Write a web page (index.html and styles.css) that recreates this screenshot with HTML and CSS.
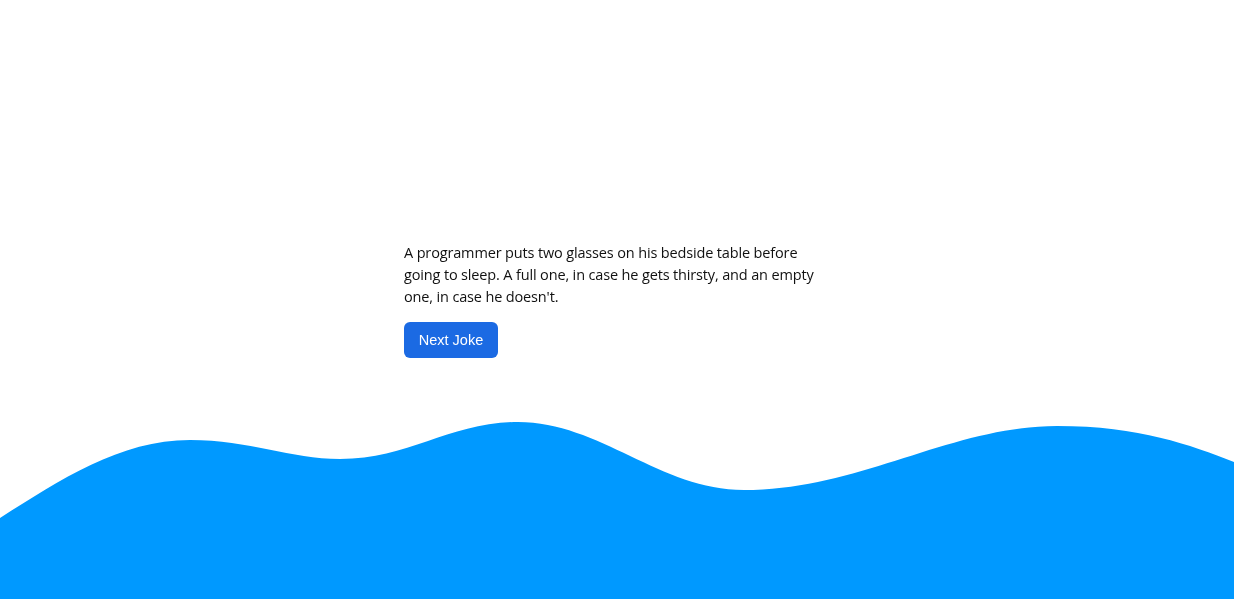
FILE: index.html
```html
<!DOCTYPE html>
<html lang="en">
<head>
<meta charset="utf-8">
<title>Jokes</title>
<link rel="stylesheet" href="styles.css">
</head>
<body>
<main class="page">
  <section class="joke-card">
    <p class="joke-text">A programmer puts two glasses on his bedside table before going to sleep. A full one, in case he gets thirsty, and an empty one, in case he doesn't.</p>
    <button class="next-btn" type="button">Next Joke</button>
  </section>
</main>
<svg class="wave" viewBox="0 0 1234 178" preserveAspectRatio="none" aria-hidden="true">
  <path fill="#0099ff" d="M0,97 C60,59 120,19 190,19 C250,19 290,38 340,38 C410,38 450,1 518,1 C600,1 660,69 744,69 C860,69 950,5 1057,5 C1140,5 1190,24 1234,41 L1234,178 L0,178 Z"/>
</svg>
</body>
</html>
```
FILE: styles.css
```css
html, body {
  margin: 0;
  padding: 0;
  background: #ffffff;
}
body {
  font-family: "Open Sans", "Noto Sans", sans-serif;
  color: #111111;
  overflow: hidden;
}
.page {
  min-height: 100vh;
  display: flex;
  align-items: center;
  justify-content: center;
  position: relative;
  z-index: 1;
}
.joke-card {
  width: 426px;
  display: flex;
  flex-direction: column;
  align-items: flex-start;
  gap: 14px;
  padding-top: 1px;
}
.joke-text {
  margin: 0;
  font-size: 14.5px;
  font-weight: 500;
  line-height: 22px;
  letter-spacing: -0.15px;
}
.next-btn {
  font-family: "Liberation Sans", Arial, sans-serif;
  font-size: 14.5px;
  color: #ffffff;
  background: #1b6ae3;
  border: none;
  border-radius: 6px;
  width: 94px;
  height: 36px;
  padding: 0;
  cursor: pointer;
}
.wave {
  position: fixed;
  left: 0;
  bottom: 0;
  width: 100%;
  height: 178px;
  display: block;
  z-index: 0;
}
```
